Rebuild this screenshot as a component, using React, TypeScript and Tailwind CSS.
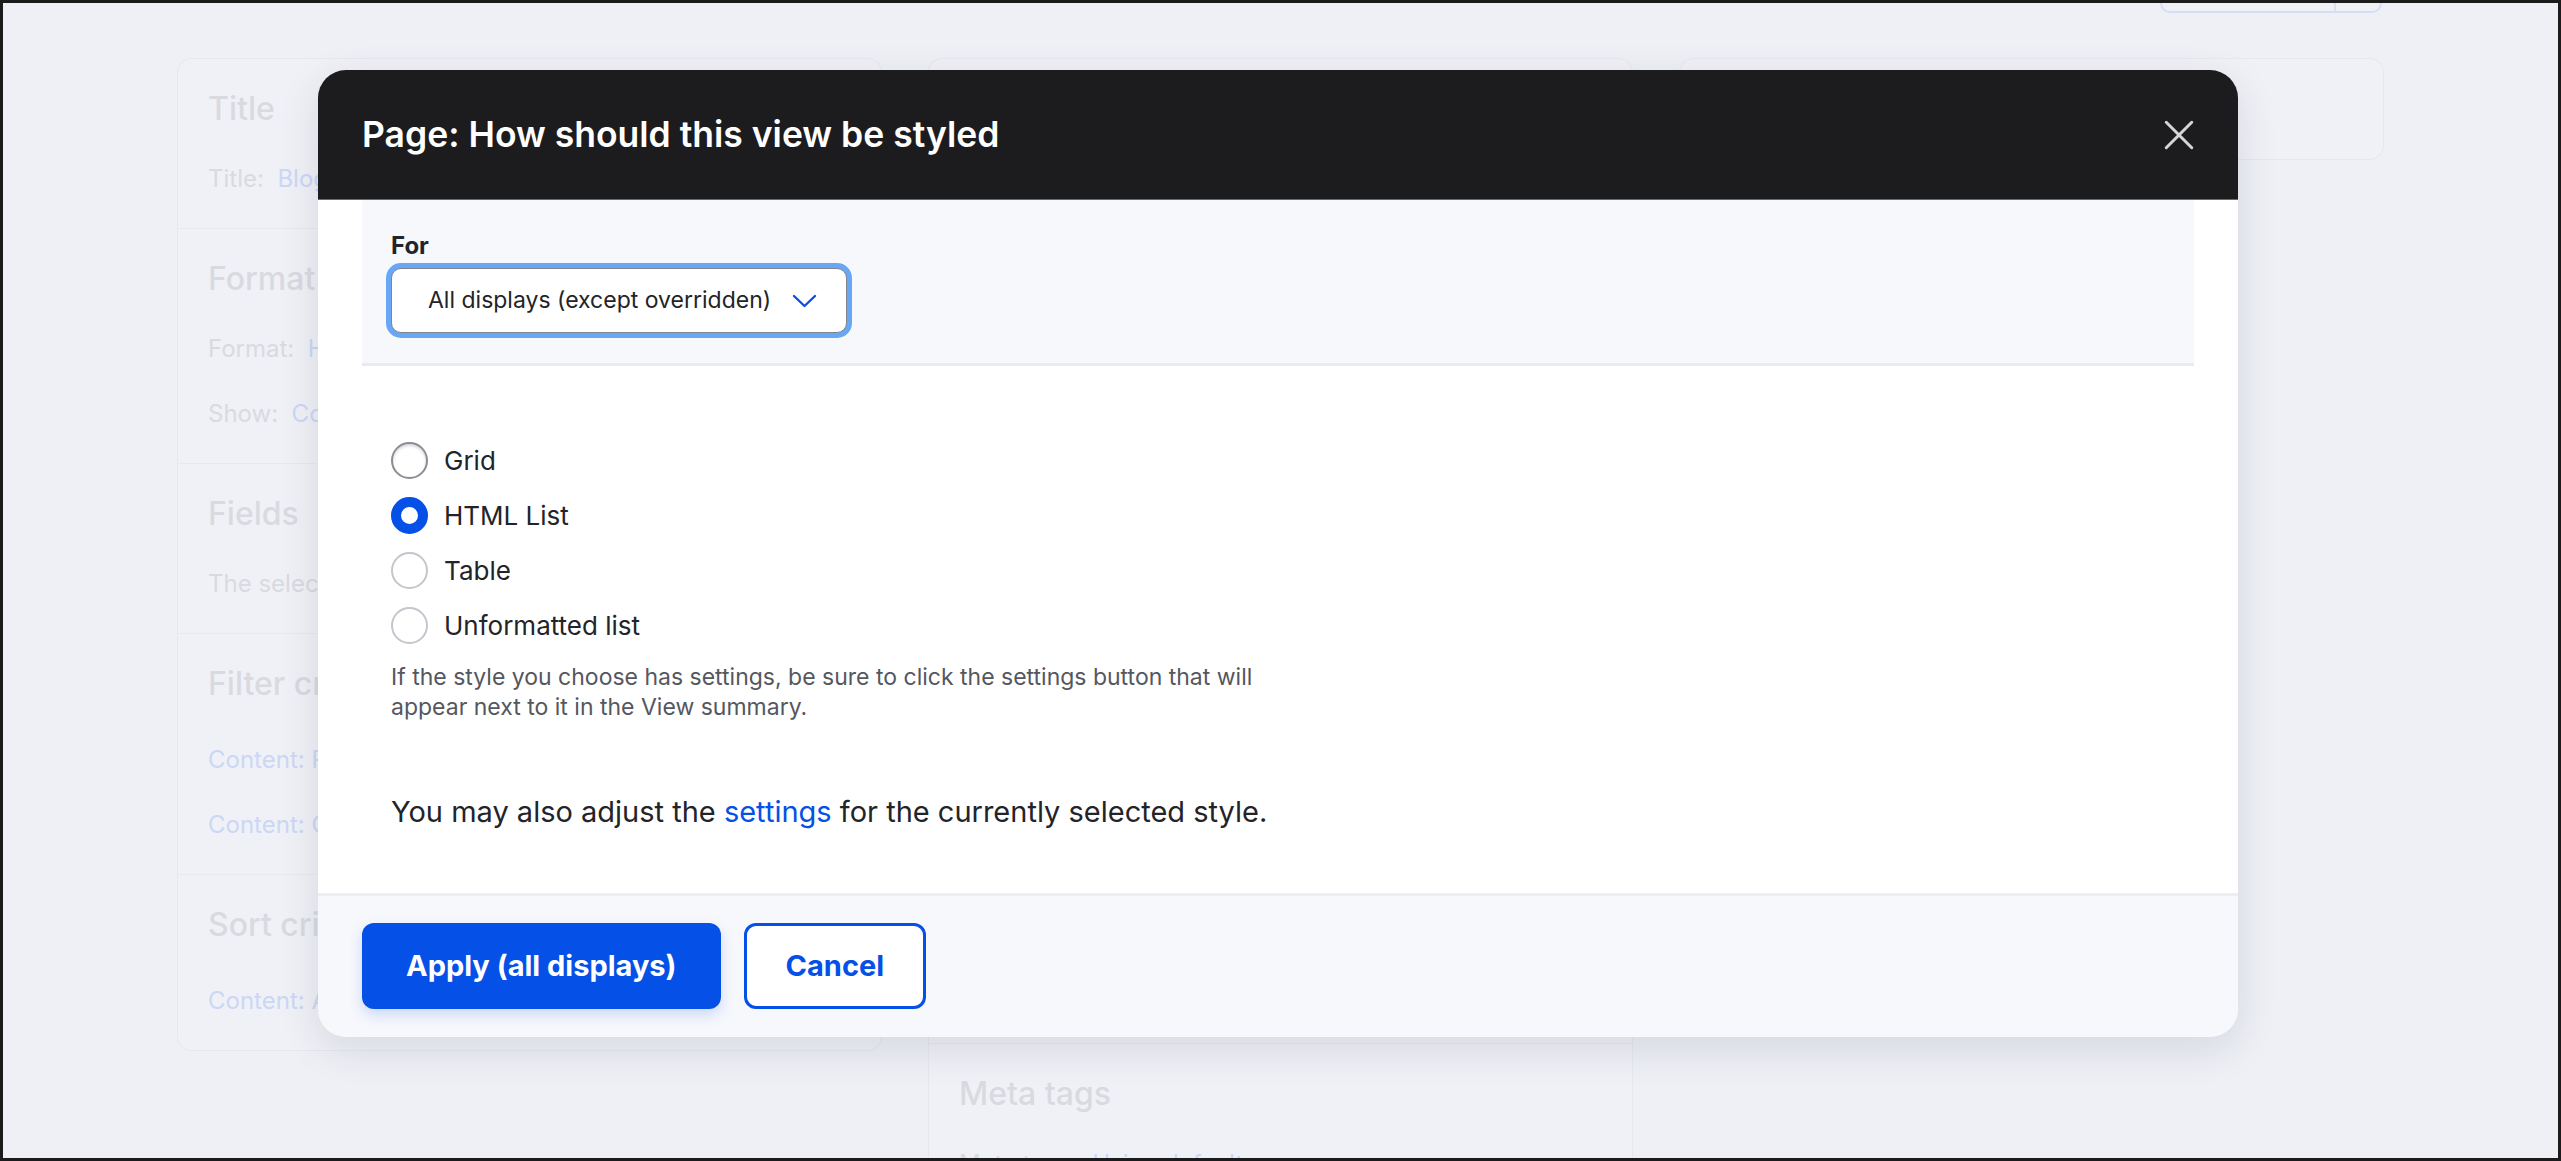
type Line = { label?: string; link?: string }

type Section = { heading: string; lines: Line[]; roomy?: boolean }

const leftSections: Section[] = [
  { heading: 'Title', lines: [{ label: 'Title:', link: 'Blog' }] },
  {
    heading: 'Format',
    lines: [
      { label: 'Format:', link: 'HTML list' },
      { label: 'Show:', link: 'Content | teaser' },
    ],
  },
  { heading: 'Fields', lines: [{ label: 'The selected style or row format does not use fields.' }] },
  {
    heading: 'Filter criteria',
    lines: [{ link: 'Content: Published (= Yes)' }, { link: 'Content: Content type (= Article)' }],
    roomy: true,
  },
  { heading: 'Sort criteria', lines: [{ link: 'Content: Authored on (desc)' }], roomy: true },
]

const styles = ['Grid', 'HTML List', 'Table', 'Unformatted list']

function CardSection({ section, last }: { section: Section; last?: boolean }) {
  return (
    <div className={`px-[30px] pt-[30px] pb-[32px] ${last ? '' : 'border-b border-[#e7e9ee]'}`}>
      <h3 className="text-[32px] leading-[40px] font-medium text-[#d9dae0]">{section.heading}</h3>
      <div className={`flex flex-col gap-[31px] ${section.roomy ? 'mt-[39px]' : 'mt-[33px]'}`}>
        {section.lines.map((line, i) => (
          <p key={i} className="truncate text-[24px] leading-[34px] text-[#d9dae0]">
            {line.label && <span>{line.label}</span>}
            {line.label && line.link && <span>&nbsp; </span>}
            {line.link && <span className="text-[#cbd7f5]">{line.link}</span>}
          </p>
        ))}
      </div>
    </div>
  )
}

function Radio({ label, checked, dark }: { label: string; checked?: boolean; dark?: boolean }) {
  return (
    <label className="flex h-[37px] items-center gap-[16px]">
      <span
        className={`block h-[37px] w-[37px] shrink-0 rounded-full bg-white ${
          checked
            ? 'border-[10px] border-[#0550e6]'
            : dark
              ? 'border-2 border-[#8a8d94] shadow-[inset_0_2px_3px_rgba(0,0,0,0.15)]'
              : 'border-2 border-[#c4c6cc]'
        }`}
      />
      <span className="text-[26px] leading-[34px] text-[#232429]">{label}</span>
    </label>
  )
}

export default function App() {
  return (
    <div className="relative h-[1161px] w-[2561px] overflow-hidden border-[3px] border-[#1b1b1b] bg-[#eef0f5] font-[Inter,'Liberation_Sans',sans-serif]">
      {/* page behind the dialog */}
      <div className="flex justify-end pr-[176px]">
        <div className="-mt-[46px] flex h-[56px] w-[222px] rounded-[10px] border-2 border-[#d6def2]">
          <div className="flex-1 border-r-2 border-[#d6def2]" />
          <div className="w-[44px]" />
        </div>
      </div>
      <div className="mt-[45px] grid grid-cols-3 items-start gap-[46px] px-[174px]">
        <div className="rounded-[14px] border border-[#e6e8ee] bg-[#f0f1f6]">
          {leftSections.map((s, i) => (
            <CardSection key={s.heading} section={s} last={i === leftSections.length - 1} />
          ))}
        </div>
        <div className="rounded-[14px] border border-[#e6e8ee] bg-[#f0f1f6]">
          <div className="h-[985px] border-b border-[#e7e9ee]" />
          <CardSection section={{ heading: 'Meta tags', lines: [{ label: 'Meta tags:', link: 'Using defaults' }] }} last />
        </div>
        <div className="h-[102px] rounded-[14px] border border-[#e6e8ee] bg-[#f0f1f6]" />
      </div>

      {/* dialog */}
      <div className="absolute top-[67px] left-[315px] w-[1920px] rounded-[28px] shadow-[0_12px_40px_rgba(30,40,70,0.12)]">
        <div className="flex h-[130px] items-center justify-between rounded-t-[28px] border-b border-[#6b6b6b] bg-[#1c1c1e] pr-[41px] pl-[44px]">
          <h2 className="text-[35.5px] font-semibold text-white">Page: How should this view be styled</h2>
          <svg className="h-[36px] w-[36px] text-[#d6d6d6]" viewBox="0 0 24 24" fill="none" stroke="currentColor" strokeWidth={2} strokeLinecap="round">
            <path d="M3.5 3.5l17 17M20.5 3.5l-17 17" />
          </svg>
        </div>

        <div className="bg-white px-[44px] pb-[63px]">
          <div className="border-b-[3px] border-[#e9ebf1] bg-[#f7f8fc] px-[29px] pt-[31px] pb-[30px]">
            <div className="text-[24px] leading-[30px] font-bold text-[#232429]">For</div>
            <div className="mt-[7px] flex h-[65px] w-[456px] items-center justify-between rounded-[10px] border border-[#80848d] bg-white pr-[29px] pl-[36px] ring-[5px] ring-[#68a7f6]">
              <span className="text-[23px] text-[#232429]">All displays (except overridden)</span>
              <svg className="h-[14px] w-[25px] text-[#0b4fdc]" viewBox="0 0 25 14" fill="none" stroke="currentColor" strokeWidth={2.4} strokeLinecap="round" strokeLinejoin="round">
                <path d="M2 2l10.5 10L23 2" />
              </svg>
            </div>
          </div>

          <div className="px-[29px] pt-[76px]">
            <div className="flex flex-col gap-[18px]">
              {styles.map((s, i) => (
                <Radio key={s} label={s} checked={i === 1} dark={i === 0} />
              ))}
            </div>
            <p className="mt-[18px] w-[880px] text-[23px] leading-[30px] text-[#55575f]">
              If the style you choose has settings, be sure to click the settings button that will appear next to it in the View summary.
            </p>
            <p className="mt-[72px] text-[29px] leading-[36px] text-[#232429]">
              You may also adjust the <span className="text-[#0550e6]">settings</span> for the currently selected style.
            </p>
          </div>
        </div>

        <div className="flex gap-[23px] rounded-b-[28px] border-t-[3px] border-[#eceef3] bg-[#f7f8fc] px-[44px] pt-[27px] pb-[28px]">
          <button className="h-[86px] rounded-[12px] bg-[#0550e6] px-[44px] text-[29px] font-bold text-white shadow-[0_6px_14px_rgba(5,80,230,0.18)]">
            Apply (all displays)
          </button>
          <button className="h-[86px] rounded-[12px] border-[3px] border-[#0550e6] bg-white px-[39px] text-[29px] font-bold text-[#0550e6]">
            Cancel
          </button>
        </div>
      </div>
    </div>
  )
}
